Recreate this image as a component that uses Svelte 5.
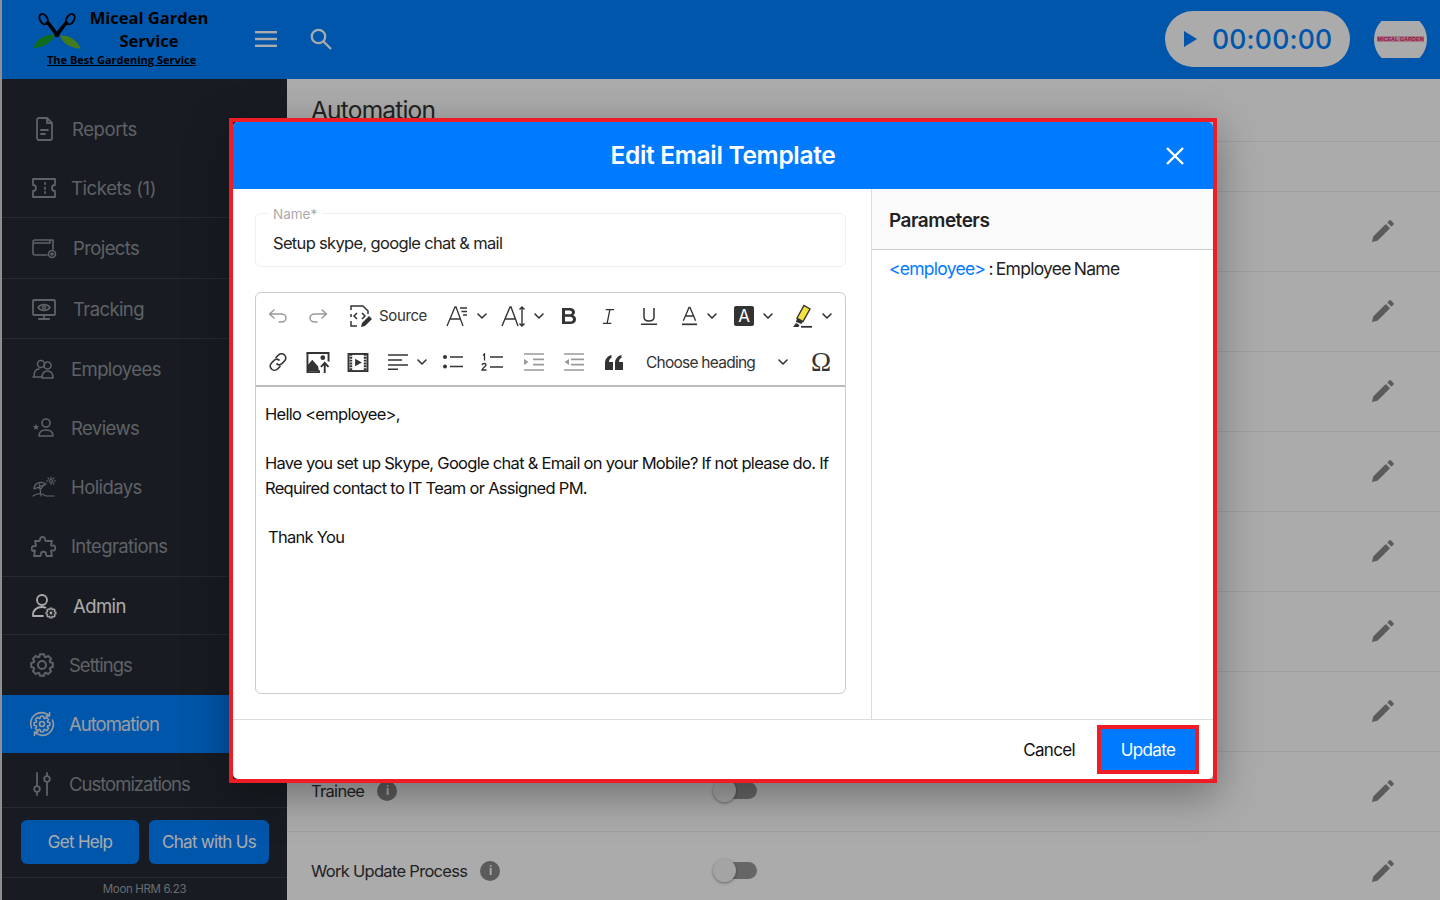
<script>
  const nav = [
    { label: 'Reports', icon: 'report', text: 72, cls: 'loose' },
    { label: 'Tickets (1)', icon: 'ticket', text: 71, cls: 'sep loose' },
    { label: 'Projects', icon: 'project', text: 73, cls: 'sep tall' },
    { label: 'Tracking', icon: 'track', text: 73, cls: 'sep' },
    { label: 'Employees', icon: 'people', text: 71, cls: 'staff' },
    { label: 'Reviews', icon: 'review', text: 71, cls: '' },
    { label: 'Holidays', icon: 'holiday', text: 71, cls: '' },
    { label: 'Integrations', icon: 'puzzle', text: 71, cls: 'sep tall' },
    { label: 'Admin', icon: 'admin', text: 73, cls: 'sep bright' },
    { label: 'Settings', icon: 'gear', text: 69, cls: 'left settings' },
    { label: 'Automation', icon: 'auto', text: 69, cls: 'active left' },
    { label: 'Customizations', icon: 'sliders', text: 69, cls: 'last left' }
  ]

  const rows = ['', '', '', '', '', '', '', 'Trainee', 'Work Update Process']

  // cog outline used by the settings, automation and admin icons
  function gearPath(cx, cy, outer, inner, teeth) {
    const pts = []
    const step = (Math.PI * 2) / teeth
    for (let i = 0; i < teeth; i++) {
      const a = i * step
      for (const [r, d] of [[inner, -0.5], [outer, -0.3], [outer, 0.3], [inner, 0.5]]) {
        const t = a + d * step * 0.8
        pts.push((cx + r * Math.cos(t)).toFixed(2) + ' ' + (cy + r * Math.sin(t)).toFixed(2))
      }
    }
    return 'M' + pts.join('L') + 'z'
  }
</script>

{#snippet navIcon(name)}
  <svg class="nav-icon" viewBox="0 0 26 26" fill="none" stroke="currentColor" stroke-width="1.6" stroke-linecap="round" stroke-linejoin="round">
    {#if name === 'report'}
      <path d="M8 2h8l5 5v15a2 2 0 0 1-2 2H8a2 2 0 0 1-2-2V4a2 2 0 0 1 2-2zM16 2v5h5M10 14h7M10 18h4" stroke-width="1.8" />
    {:else if name === 'ticket'}
      <path d="M2 4h22v6a3 3 0 0 0 0 6v6H2v-6a3 3 0 0 0 0-6zM14 8v1M14 12.500v1.500M14 17v1" stroke-width="1.8" />
    {:else if name === 'project'}
      <path d="M2 7a2 2 0 0 1 2-2h18v9M2 8v10a2 2 0 0 0 2 2h12M2 8h17V5" />
      <circle cx="21" cy="19" r="3.500" /><circle cx="21" cy="19" r="1" />
    {:else if name === 'track'}
      <path d="M3 4h20a1 1 0 0 1 1 1v13a1 1 0 0 1-1 1H3a1 1 0 0 1-1-1V5a1 1 0 0 1 1-1zM13 19v3M8 23h10" stroke-width="1.800" />
      <path d="M7 11.500c3-4 9-4 12 0-3 4-9 4-12 0z" /><circle cx="13" cy="11.500" r="1.500" />
    {:else if name === 'people'}
      <circle cx="10" cy="8" r="3.500" /><circle cx="16.500" cy="9.500" r="3.500" />
      <path d="M3 21c0-5 2-8 5-8M2 21h8M11 22c0-5 2-7 5.500-7s5.500 2 5.500 7z" />
    {:else if name === 'review'}
      <circle cx="15" cy="8" r="4" />
      <path d="M8 21c0-4 3-6 7-6s7 2 7 6z" />
      <path d="M5 9l1 2 2 .3-1.500 1.500.4 2L5 13.800 3.100 14.800l.4-2L2 11.300 4 11z" fill="currentColor" stroke="none" />
    {:else if name === 'holiday'}
      <path d="M3 15c0-5 5-8 10-6l2 1zM3 15l4-1.500 3 1.500 2-3 3-2M8.500 10l1.500 12M2 22c4-3 9-3 13 0h8" stroke-width="1.200" />
      <path d="M20 3v1.500M20 9v1.500M15.500 7H17M23 7h1.500M17 4l1 1M22 9l1 1M23 4l-1 1" stroke-width="1.100" />
      <circle cx="20" cy="7" r="1.500" stroke-width="1.100" />
    {:else if name === 'puzzle'}
      <path d="M9 7c-.5-4 6-4 5 0 0 1 1 1 2 1h5l-1 4c0 1 1 1 2 .5 3-1 3 6 0 5-1 0-2-.5-2 .5l1 5h-5c-1 0-1-1-1-2 0-3-5-3-5 0 0 1 0 2-1 2H3l1-5c0-1-1-1-2 0-2 0-2-5 1-5 1 0 2 .5 2-.5L4 8h4c1 0 1 0 1-1z" stroke-width="1.800" />
    {:else if name === 'admin'}
      <circle cx="11" cy="7" r="5" stroke-width="1.800" />
      <path d="M2 23c-.5-6 4-9 9-9 1.500 0 2.500.2 3.500.6M2 23h10" stroke-width="1.800" />
      <path d={gearPath(20, 20, 5, 3.600, 8)} stroke-width="1.200" />
      <circle cx="20" cy="20" r="1.400" fill="currentColor" stroke="none" />
    {:else if name === 'gear'}
      <circle cx="13" cy="13" r="4" stroke-width="2" />
      <path d={gearPath(13, 13, 11, 8.700, 8)} stroke-width="2" />
    {:else if name === 'auto'}
      <circle cx="13" cy="13" r="2.500" />
      <path d={gearPath(13, 13, 8, 6, 8)} stroke-width="1.500" />
      <path d="M2.500 17A11 11 0 0 1 20 4.500M23.500 9a11 11 0 0 1-17.500 12.500M20.500 1.500v3.500H17M5.500 24.500V21H9" />
    {:else if name === 'sliders'}
      <path d="M8 2v13M8 21v3M18 2v3M18 11v13" stroke-width="1.800" />
      <circle cx="8" cy="18" r="2.800" stroke-width="1.800" /><circle cx="18" cy="8" r="2.800" stroke-width="1.800" />
    {/if}
  </svg>
{/snippet}

{#snippet chev()}
  <svg class="chev" viewBox="0 0 10 6" fill="none" stroke="currentColor" stroke-width="1.600" stroke-linecap="round" stroke-linejoin="round"><path d="M1 1l4 4 4-4" /></svg>
{/snippet}

<div class="page">
  <header class="topbar">
    <div class="brand">
      <svg class="logo" viewBox="0 0 50 36">
        <path d="M2 34C5 25 14 20 23 21 20 29 12 34 2 34z" fill="#17a02e" />
        <path d="M48 35C45 26 36 21 28 22 30 30 38 34 48 35z" fill="#63b72e" />
        <path d="M25 21 15 8M25 21 35 8" stroke="#000" stroke-width="3.400" />
        <ellipse cx="12" cy="6" rx="3.600" ry="5.400" transform="rotate(-30 12 6)" fill="none" stroke="#000" stroke-width="1.800" />
        <ellipse cx="38" cy="6" rx="3.600" ry="5.400" transform="rotate(30 38 6)" fill="none" stroke="#000" stroke-width="1.800" />
        <circle cx="25" cy="21" r="2.500" fill="#000" />
      </svg>
      <div class="brand-name">Miceal Garden<br />Service</div>
      <div class="tagline">The Best Gardening Service</div>
    </div>
    <svg class="menu" viewBox="0 0 22 16" fill="#fff"><rect width="22" height="2.400" /><rect y="6.800" width="22" height="2.400" /><rect y="13.600" width="22" height="2.400" /></svg>
    <svg class="search" viewBox="0 0 22 22" fill="none" stroke="#fff" stroke-width="2.300"><circle cx="8.500" cy="8.500" r="6.700" /><path d="M13.500 13.500 21 21" /></svg>
    <div class="timer">
      <svg class="play" viewBox="0 0 13 16"><path d="M0 0l13 8-13 8z" fill="#007fff" /></svg>
      <span>00:00:00</span>
    </div>
    <div class="avatar"><div class="avatar-disc"><span>MICEAL GARDEN</span></div></div>
  </header>

  <div class="below">
    <aside class="sidebar">
      <nav>
        {#each nav as item}
          <div class="nav-item {item.cls}">
            <span class="nav-icon-box">{@render navIcon(item.icon)}</span>
            <span class="nav-label" style:left="{item.text}px">{item.label}</span>
          </div>
        {/each}
      </nav>
      <div class="help">
        <button>Get Help</button>
        <button class="chat">Chat with Us</button>
      </div>
      <div class="version">Moon HRM 6.23</div>
    </aside>

    <main class="content">
      <h1>Automation</h1>
      <div class="thead"></div>
      {#each rows as row}
        <div class="row">
          <div class="row-name">
            {#if row}
              <span>{row}</span>
              <span class="info">i</span>
            {/if}
          </div>
          <div class="toggle"><i></i></div>
          <svg class="pencil" viewBox="0 0 24 24"><path d="M1 23l1.300-5.700L15.500 4.100l4.400 4.400L6.700 21.700zM17 2.600l2-2a1.400 1.400 0 0 1 2 0l2.400 2.400a1.400 1.400 0 0 1 0 2l-2 2z" fill="currentColor" /></svg>
        </div>
      {/each}
    </main>
  </div>

  <div class="backdrop">
    <div class="frame">
      <div class="modal">
        <div class="modal-head">
          <h2>Edit Email Template</h2>
          <svg class="close" viewBox="0 0 18 18" fill="none" stroke="#fff" stroke-width="2.400"><path d="M1 1l16 16M17 1 1 17" /></svg>
        </div>
        <div class="modal-body">
          <div class="form">
            <div class="name-field">
              <span class="name-label">Name*</span>
              <span class="name-value">Setup skype, google chat &amp; mail</span>
            </div>
            <div class="editor">
              <div class="toolbar">
                <div class="tb tb1">
                  <span class="cell muted"><svg viewBox="0 0 20 20" class="ic" fill="none" stroke="currentColor" stroke-width="1.500" stroke-linecap="round" stroke-linejoin="round"><path d="M6 4 1.500 8 6 12M2 8h11c3 0 5 1.800 5 4s-2 4-5 4h-2" /></svg></span>
                  <span class="cell muted"><svg viewBox="0 0 20 20" class="ic" fill="none" stroke="currentColor" stroke-width="1.500" stroke-linecap="round" stroke-linejoin="round"><path d="M14 4l4.500 4L14 12M18 8H7c-3 0-5 1.800-5 4s2 4 5 4h2" /></svg></span>
                  <span class="cell source">
                    <svg viewBox="0 0 24 24" class="ic24" fill="none" stroke="currentColor" stroke-width="1.500"><path d="M2 6V2h12l5 5v3M2 10v3M2 17v5h6" /><path d="M8 9l-3 3 3 3M13 9l3 3-3 3" /><path d="M12 23l1-4 7-7 3 3-7 7z" fill="currentColor" stroke="none" /></svg>
                    <span class="source-text">Source</span>
                  </span>
                  <span class="cell">
                    <span class="glyphic">
                      <svg viewBox="0 0 22 22" class="ic22" fill="none" stroke="currentColor" stroke-width="1.300"><path d="M1 21 9 2h1l7 19M4 14h11" /><path d="M14 3h7M15.500 6.500H21M17 10h4" /></svg>
                    </span>
                    {@render chev()}
                  </span>
                  <span class="cell">
                    <svg viewBox="0 0 24 22" class="ic24w" fill="none" stroke="currentColor" stroke-width="1.400"><path d="M1 21 9 2h1l7 19M4 14h11" /><path d="M21 2v19M18.500 4.500 21 2l2.500 2.500M18.500 18.500 21 21l2.500-2.500" /></svg>
                    {@render chev()}
                  </span>
                  <span class="cell"><svg viewBox="0 0 18 18" class="ic18" fill="currentColor"><path d="M2 1h8c3 0 5 1.700 5 4 0 1.500-.8 2.700-2 3.300 1.800.6 3 2 3 4 0 2.900-2.300 4.700-5.500 4.700H2zm3 2.500v3.800h4.500c1.500 0 2.500-.8 2.500-1.900s-1-1.900-2.500-1.900zm0 6.300v4.700H10c1.800 0 3-.9 3-2.300s-1.200-2.400-3-2.400z" /></svg></span>
                  <span class="cell"><svg viewBox="0 0 14 18" class="ic-i" fill="none" stroke="currentColor" stroke-width="1.400"><path d="M4 1.500h9M1 16.500h9M8.500 1.500l-3 15" /></svg></span>
                  <span class="cell"><svg viewBox="0 0 18 18" class="ic18" fill="none" stroke="currentColor" stroke-width="1.500"><path d="M4 1v9c0 2.500 2 4 5 4s5-1.500 5-4V1M1 17.200h16" /></svg></span>
                  <span class="cell">
                    <svg viewBox="0 0 18 20" class="ic-a" fill="none" stroke="currentColor" stroke-width="1.400"><path d="M2.500 15 8.500 1h1l6 14M5 10h8" /><path d="M1 18.800h16" stroke-width="1.800" /></svg>
                    {@render chev()}
                  </span>
                  <span class="cell">
                    <span class="a-bg">A</span>
                    {@render chev()}
                  </span>
                  <span class="cell">
                    <svg viewBox="0 0 22 24" class="ic-mark"><path d="M6 14 13 1.500l6 3.500-7 12.500z" fill="#f5e23c" stroke="#333" stroke-width="1.400" /><path d="M6 14l6 3.500-1.500 2.500-5.500-2z" fill="#333" /><path d="M2 23l3-4 3.500 2-1 2z" fill="#333" /><path d="M10 22.800h11" stroke="#333" stroke-width="1.800" /></svg>
                    {@render chev()}
                  </span>
                </div>
                <div class="tb tb2">
                  <span class="cell"><svg viewBox="0 0 20 20" class="ic-link" fill="none" stroke="currentColor" stroke-width="1.700" stroke-linecap="round"><path d="M8 5.500 10.500 3a4 4 0 0 1 6 6L14 11.500a4 4 0 0 1-5 .5" /><path d="M12 14.500 9.500 17a4 4 0 0 1-6-6L6 8.500a4 4 0 0 1 5-.5" /></svg></span>
                  <span class="cell"><svg viewBox="0 0 26 24" class="ic-img"><path d="M1 2h23v9" fill="none" stroke="currentColor" stroke-width="2" /><path d="M2 2v20h12v-2" fill="none" stroke="currentColor" stroke-width="2" /><path d="M2 21V15l5-6 6 7 1 5z" fill="currentColor" /><circle cx="18" cy="7" r="2.500" fill="currentColor" /><path d="M20 23v-10M16 16.500l4-4 4 4" fill="none" stroke="currentColor" stroke-width="2" /></svg></span>
                  <span class="cell"><svg viewBox="0 0 22 20" class="ic-media" fill="none" stroke="currentColor"><rect x="1" y="1" width="20" height="18" stroke-width="2" /><path d="M3.500 1v18M18.500 1v18" stroke-width="2.800" stroke-dasharray="2 1" /><path d="M8 6l7 4-7 4z" fill="currentColor" stroke="none" /></svg></span>
                  <span class="cell">
                    <svg viewBox="0 0 20 16" class="ic-list" fill="none" stroke="currentColor" stroke-width="1.600"><path d="M0 1h20M0 6h14M0 11h20M0 15.200h10" /></svg>
                    {@render chev()}
                  </span>
                  <span class="cell"><svg viewBox="0 0 20 16" class="ic-list" fill="none" stroke="currentColor" stroke-width="1.600"><circle cx="2" cy="3" r="2" fill="currentColor" stroke="none" /><circle cx="2" cy="12.500" r="2" fill="currentColor" stroke="none" /><path d="M7 3h13M7 12.500h13" /></svg></span>
                  <span class="cell"><svg viewBox="0 0 22 18" class="ic-num" fill="none" stroke="currentColor" stroke-width="1.600"><path d="M2 2.500 3.500 1v6.500" stroke-width="1.300" /><path d="M1 12c.5-2 4-2 4 0 0 1.500-3 2.500-4 5h4.500" stroke-width="1.300" /><path d="M9 4h13M9 14h13" /></svg></span>
                  <span class="cell muted"><svg viewBox="0 0 21 18" class="ic-ind" fill="none" stroke="currentColor" stroke-width="1.700"><path d="M1 1h20M10 6.300h11M10 11.700h11M1 17h20" /><path d="M1 6l4.500 3L1 12z" fill="currentColor" stroke="none" /></svg></span>
                  <span class="cell muted"><svg viewBox="0 0 21 18" class="ic-ind" fill="none" stroke="currentColor" stroke-width="1.700"><path d="M1 1h20M8 6.300h13M8 11.700h13M1 17h20" /><path d="M6 6 1.500 9 6 12z" fill="currentColor" stroke="none" /></svg></span>
                  <span class="cell"><svg viewBox="0 0 18 15" class="ic-quote" fill="currentColor"><path d="M0 15V8c0-4 2.500-7 6.500-8v3C4.800 3.600 4 5 4 7h4v8zM10 15V8c0-4 2.500-7 6.500-8v3C14.800 3.600 14 5 14 7h4v8z" /></svg></span>
                  <span class="cell heading"><span>Choose heading</span>{@render chev()}</span>
                  <span class="cell omega">Ω</span>
                </div>
              </div>
              <div class="editor-text">
                <p>Hello &lt;employee&gt;,</p>
                <p class="gap">Have you set up Skype, Google chat &amp; Email on your Mobile? If not please do. If Required contact to IT Team or Assigned PM.</p>
                <p class="gap thanks">Thank You</p>
              </div>
            </div>
          </div>
          <div class="params">
            <div class="params-head">Parameters</div>
            <div class="params-body"><span class="param-key">&lt;employee&gt;</span> : Employee Name</div>
          </div>
        </div>
        <div class="modal-foot">
          <button class="cancel">Cancel</button>
          <button class="update">Update</button>
        </div>
      </div>
    </div>
  </div>
</div>

<style>
  :global(body) {
    margin: 0;
    overflow: hidden;
    font-family: Inter, "Liberation Sans", sans-serif;
  }

  .page {
    position: relative;
    width: 1440px;
    height: 900px;
    overflow: hidden;
    background: #d6d6d6;
    padding-left: 2px;
    box-sizing: border-box;
    display: flex;
    flex-direction: column;
  }

  .topbar {
    height: 79px;
    flex: none;
    box-sizing: border-box;
    padding-bottom: 1px;
    background: #0080ff;
    display: flex;
    align-items: center;
  }

  .brand {
    position: relative;
    align-self: flex-start;
    width: 253px;
    height: 79px;
    flex: none;
  }

  .logo {
    position: absolute;
    left: 29px;
    top: 13px;
    width: 52px;
    height: 37px;
  }

  .brand-name {
    position: absolute;
    left: 72px;
    top: 6px;
    width: 150px;
    text-align: center;
    font: 700 16.500px/23px "Open Sans", sans-serif;
    color: #000;
  }

  .tagline {
    position: absolute;
    left: 45px;
    top: 52px;
    font: 700 11px/16px "Open Sans", sans-serif;
    color: #000;
    text-decoration: underline;
    white-space: nowrap;
  }

  .menu {
    width: 22px;
    height: 16px;
    margin-right: 33px;
  }

  .search {
    width: 22px;
    height: 22px;
  }

  .timer {
    margin-left: auto;
    width: 185px;
    height: 56px;
    border-radius: 28px;
    background: #fff;
    display: flex;
    align-items: center;
    color: #0080ff;
    font: 500 26.500px Inter, sans-serif;
    letter-spacing: 0.200px;
    box-sizing: border-box;
    padding-left: 19px;
  }

  .play {
    width: 13px;
    height: 16px;
    margin-right: 15px;
  }

  .avatar {
    width: 53px;
    height: 37px;
    margin: 0 13px 0 24px;
    overflow: hidden;
    display: flex;
    align-items: center;
    justify-content: center;
  }

  .avatar-disc {
    width: 53px;
    height: 53px;
    flex: none;
    border-radius: 50%;
    background: #fff;
    display: flex;
    align-items: center;
    justify-content: center;
  }

  .avatar-disc span {
    font: 700 5.500px "Liberation Sans", sans-serif;
    color: #e0185f;
    white-space: nowrap;
    background: #f4b8cf;
  }

  .below {
    flex: 1;
    display: flex;
    min-height: 0;
  }

  .sidebar {
    width: 285px;
    flex: none;
    background: #242b34;
    color: #8d9297;
    display: flex;
    flex-direction: column;
    padding-top: 20px;
    box-sizing: border-box;
  }

  .nav-item {
    position: relative;
    height: 59px;
    display: flex;
    align-items: center;
    font-size: 18.500px;
    letter-spacing: -0.600px;
  }

  .nav-item.loose {
    letter-spacing: -0.400px;
  }

  .nav-item.left {
    letter-spacing: -1px;
  }

  .nav-item.sep {
    border-bottom: 1px solid #3a4149;
  }

  .nav-item.tall {
    height: 60px;
  }

  .nav-item.staff {
    height: 58px;
    padding-top: 1px;
  }

  .nav-item.bright {
    color: #fff;
    height: 57px;
  }

  .nav-item.settings {
    height: 60px;
  }

  .nav-item.active {
    background: #0080ff;
    color: #e3e8ef;
    height: 58px;
  }

  .nav-item.last {
    height: 47px;
    padding-top: 7px;
    border-bottom: 1px solid #3a4149;
  }

  .nav-icon-box {
    position: absolute;
    left: 29px;
    width: 26px;
    height: 26px;
  }

  .left .nav-icon-box {
    left: 27px;
  }

  .nav-icon {
    display: block;
    width: 26px;
    height: 26px;
  }

  .nav-label {
    position: absolute;
    margin-left: -2px;
    white-space: nowrap;
  }

  .help {
    display: flex;
    gap: 10px;
    padding: 12px 0 13px 19px;
    border-bottom: 1px solid #3a4149;
  }

  .help button {
    width: 118px;
    height: 44px;
    border: 0;
    border-radius: 6px;
    background: #0080ff;
    color: #fff;
    font: 400 17px Inter, sans-serif;
    letter-spacing: -0.700px;
    padding: 0;
  }

  .help .chat {
    width: 120px;
  }

  .version {
    text-align: center;
    font-size: 11.500px;
    line-height: 22px;
    color: #9ca1a6;
    letter-spacing: -0.350px;
  }

  .content {
    flex: 1;
    background: #fff;
    min-width: 0;
  }

  h1 {
    margin: 0;
    height: 63px;
    box-sizing: border-box;
    padding: 16px 0 0 24px;
    font: 400 24.500px/30px Inter, sans-serif;
    letter-spacing: -0.800px;
    color: #333;
    border-bottom: 1px solid #eee;
  }

  .thead {
    height: 49px;
    border-bottom: 1px solid #eee;
  }

  .row {
    height: 79px;
    border-bottom: 1px solid #eee;
    display: grid;
    grid-template-columns: 404px 1fr 28px;
    align-items: center;
    padding: 0 41px 0 24px;
    color: #333;
    font-size: 16.500px;
    letter-spacing: -0.700px;
  }

  .row-name {
    display: flex;
    align-items: center;
    gap: 13px;
    margin-bottom: 2px;
  }

  .info {
    width: 20px;
    height: 20px;
    border-radius: 50%;
    background: #888;
    color: #fff;
    font: 700 12px/20px Inter, sans-serif;
    text-align: center;
  }

  .toggle {
    position: relative;
    width: 42px;
    height: 17px;
    margin-bottom: 2px;
    border-radius: 9px;
    background: #999;
  }

  .toggle i {
    position: absolute;
    left: -2px;
    top: -3px;
    width: 23px;
    height: 23px;
    border-radius: 50%;
    background: #f5f5f5;
    box-shadow: 0 1px 3px rgba(0, 0, 0, 0.4);
  }

  .pencil {
    width: 23px;
    height: 23px;
    color: #888;
  }

  .backdrop {
    position: absolute;
    inset: 0;
    background: rgba(0, 0, 0, 0.33);
    padding: 118px 0 0 229px;
  }

  .frame {
    width: 988px;
    height: 665px;
    box-sizing: border-box;
    border: 4px solid #ee1c25;
    box-shadow: 0 12px 40px rgba(0, 0, 0, 0.35);
  }

  .modal {
    height: 100%;
    background: #fff;
    border-radius: 5px;
    overflow: hidden;
    display: flex;
    flex-direction: column;
  }

  .modal-head {
    height: 67px;
    flex: none;
    box-sizing: border-box;
    padding-bottom: 1px;
    background: #007bff;
    display: flex;
    align-items: center;
    justify-content: center;
    position: relative;
  }

  h2 {
    margin: 0;
    font: 600 24.500px Inter, sans-serif;
    letter-spacing: -0.300px;
    color: #fff;
  }

  .close {
    position: absolute;
    right: 29px;
    top: 25px;
    width: 18px;
    height: 18px;
  }

  .modal-body {
    flex: 1;
    min-height: 0;
    display: grid;
    grid-template-columns: 639px 1fr;
  }

  .form {
    padding: 24px 25px 0 22px;
    border-right: 1px solid #ddd;
    border-bottom: 1px solid #ddd;
  }

  .name-field {
    position: relative;
    height: 54px;
    box-sizing: border-box;
    border: 1px solid #f0f0f0;
    border-radius: 6px;
    padding: 18px 0 0 17px;
  }

  .name-label {
    position: absolute;
    left: 13px;
    top: -8px;
    padding: 0 5px 0 4px;
    background: #fff;
    color: #aaa;
    font-size: 13.500px;
    line-height: 16px;
  }

  .name-value {
    font-size: 16.500px;
    line-height: 22px;
    letter-spacing: -0.670px;
    color: #222;
  }

  .editor {
    margin-top: 25px;
    height: 402px;
    box-sizing: border-box;
    border: 1px solid #ccc;
    border-radius: 6px;
  }

  .toolbar {
    height: 92px;
    border-bottom: 2px solid #bbb;
    color: #333;
    padding-left: 2px;
  }

  .tb {
    display: grid;
    height: 46px;
  }

  .tb1 {
    grid-template-columns: 40px 40px 100px 57px 54px 39px 40px 41px 60px 49px 66px;
  }

  .tb2 {
    grid-template-columns: 39px 41px 40px 59px 32px 46px 37px 42px 40px 166px 42px;
  }

  .cell {
    display: flex;
    align-items: center;
    justify-content: center;
    min-width: 0;
  }

  .muted {
    color: #999;
  }

  .ic {
    width: 20px;
    height: 20px;
  }

  .ic24 {
    width: 24px;
    height: 24px;
    margin-right: 6px;
  }

  .source-text {
    font-size: 15px;
    letter-spacing: -0.400px;
    margin-bottom: 2px;
  }

  .glyphic {
    display: flex;
  }

  .ic22 {
    width: 22px;
    height: 22px;
  }

  .ic24w {
    width: 24px;
    height: 22px;
  }

  .chev {
    width: 10px;
    height: 6px;
    margin-left: 9px;
    flex: none;
  }

  .ic18 {
    width: 18px;
    height: 18px;
  }

  .ic-link {
    width: 20px;
    height: 20px;
  }

  .ic-i {
    width: 13px;
    height: 17px;
  }

  .ic-a {
    width: 17px;
    height: 20px;
  }

  .a-bg {
    width: 20px;
    height: 20px;
    border-radius: 2px;
    background: #333;
    color: #fff;
    font-size: 17px;
    line-height: 20px;
    text-align: center;
  }

  .ic-mark {
    width: 22px;
    height: 24px;
  }

  .ic-img {
    width: 26px;
    height: 23px;
  }

  .ic-media {
    width: 22px;
    height: 19px;
  }

  .ic-list {
    width: 20px;
    height: 16px;
  }

  .ic-num {
    width: 22px;
    height: 18px;
  }

  .ic-ind {
    width: 21px;
    height: 18px;
  }

  .ic-quote {
    width: 18px;
    height: 15px;
  }

  .heading {
    font-size: 15.500px;
    letter-spacing: -0.750px;
  }

  .heading .chev {
    margin-left: 23px;
  }

  .omega {
    font: 400 27px "Liberation Serif", serif;
  }

  .editor-text {
    padding: 15px 9px;
    font-size: 16.500px;
    line-height: 24.500px;
    letter-spacing: -0.710px;
    color: #111;
  }

  .editor-text p {
    margin: 0;
  }

  .editor-text .gap {
    margin-top: 24.500px;
  }

  .thanks {
    padding-left: 3px;
  }

  .params {
    display: flex;
    flex-direction: column;
  }

  .params-head {
    height: 61px;
    box-sizing: border-box;
    background: #fafafa;
    border-bottom: 1px solid #ccc;
    padding: 21px 0 0 17px;
    font-size: 19px;
    line-height: 22px;
    font-weight: 600;
    letter-spacing: -0.500px;
    color: #222;
  }

  .params-body {
    flex: 1;
    padding: 8px 0 0 17px;
    font-size: 17.500px;
    line-height: 22px;
    letter-spacing: -0.750px;
    word-spacing: -1px;
    color: #222;
    border-bottom: 1px solid #ddd;
  }

  .param-key {
    color: #007bff;
  }

  .modal-foot {
    height: 59px;
    flex: none;
    display: flex;
    align-items: center;
    justify-content: flex-end;
    padding-right: 14px;
  }

  .modal-foot button {
    border: 0;
    background: none;
    font: 400 17px Inter, sans-serif;
    letter-spacing: -0.650px;
    padding: 0;
  }

  .modal-foot .cancel {
    color: #111;
    margin-right: 22px;
  }

  .modal-foot .update {
    width: 102px;
    height: 49px;
    box-sizing: border-box;
    border: 4px solid #ee1c25;
    background: #007bff;
    color: #fff;
  }
</style>
